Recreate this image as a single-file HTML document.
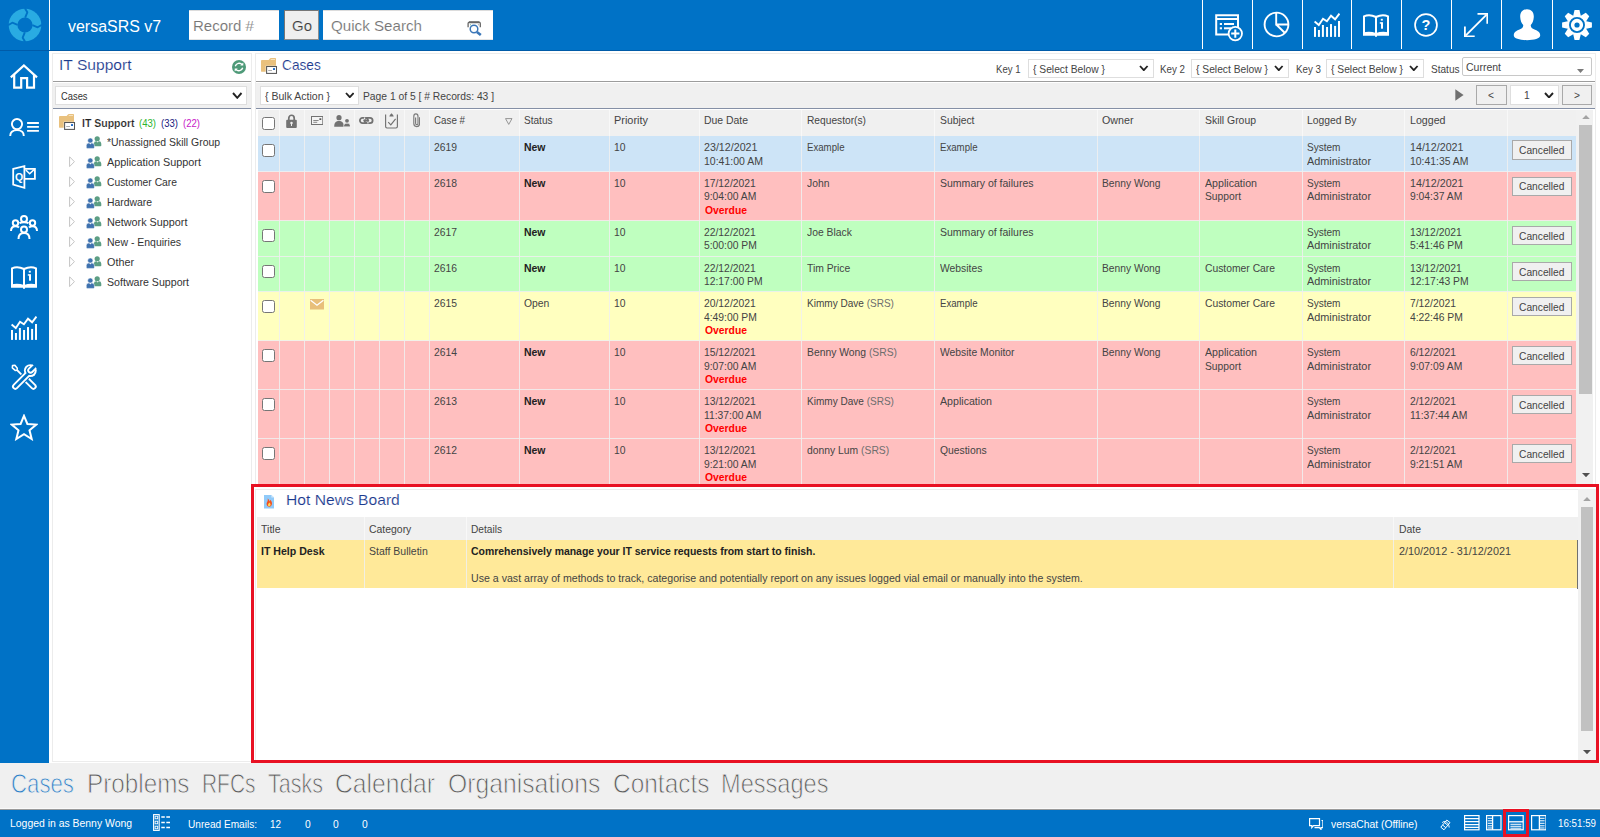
<!DOCTYPE html>
<html lang="en">
<head>
<meta charset="utf-8">
<title>versaSRS v7</title>
<style>
*{box-sizing:border-box;margin:0;padding:0}
html,body{width:1600px;height:837px;overflow:hidden}
body{position:relative;background:#fff;font-family:"Liberation Sans",sans-serif;font-size:11px;color:#444;line-height:13.6px}
.abs{position:absolute}
.t{position:absolute;white-space:nowrap;transform-origin:0 50%}
#topbar{position:absolute;left:0;top:0;width:1600px;height:50px;background:#0072c6}
#sidebar{position:absolute;left:0;top:50px;width:49px;height:713px;background:#0072c6;border-top:1px solid #005ba8}
.vsep{position:absolute;top:0;width:1px;height:49px;background:#fff}
.inp{position:absolute;top:10px;height:30px;background:#fff;color:#767676;font-size:15.2px;line-height:30px}
#gobtn{position:absolute;left:284px;top:10px;width:35px;height:30px;background:#efefef;border:1px solid #767676;border-right-color:#9a9a9a;border-bottom-color:#9a9a9a;color:#333;font-size:15.2px;line-height:28px;text-align:center}
.panel{position:absolute;background:#fff;border:1px solid #e2e2e2}
.ptitle{position:absolute;font-size:15.6px;line-height:20px;color:#2c4a8e;white-space:nowrap}
.sel{position:absolute;background:#fff;border:1px solid #dcdcdc;font-size:11px;color:#444;white-space:nowrap}
.chev{position:absolute}
.btn{position:absolute;background:#f0f0f0;border:1px solid #adadad;text-align:center;color:#333}
.hl{position:absolute;height:2px;background:#b4b4b4}
.hl2{position:absolute;height:2px;background:#8c93a5}
</style>
</head>
<body>
<div id="topbar">
<svg class="abs" style="left:0px;top:0px" width="50" height="50" viewBox="0 0 50 50" ><g fill="#29abe2"><circle cx="25" cy="25" r="16.3"/></g><circle cx="25" cy="25" r="7.6" fill="#0072c6"/><g stroke="#0072c6" stroke-width="1.9" fill="none" stroke-linejoin="round"><path d="M24.8 8 L27.3 12.3 L25.2 17.6"/><path d="M42 24.8 L37.7 27.3 L32.4 25.2"/><path d="M25.2 42 L22.7 37.7 L24.8 32.4"/><path d="M8 25.2 L12.3 22.7 L17.6 24.8"/></g></svg>
<div class="vsep" style="left:49px;height:50px"></div>
<span class="t" style="left:68px;top:18px;font-size:17.4px;line-height:17.4px;color:#fff;transform:scaleX(0.918);">versaSRS v7</span>
<div class="abs" style="left:189px;top:10px;width:90px;height:30px;background:#fff;border-top:1px solid #dcdcdc;border-bottom:1px solid #e4e4e4;"></div>
<span class="t" style="left:193px;top:19px;font-size:14.4px;line-height:14.4px;color:#767676;-webkit-text-stroke:0.12px #fff;transform:scaleX(1.044);">Record #</span>
<div class="abs" style="left:284px;top:10px;width:35px;height:30px;background:#efefef;border:1px solid #767676;border-right-color:#8f8f8f;border-bottom-color:#8f8f8f;"></div>
<span class="t" style="left:292px;top:19px;font-size:14.4px;line-height:14.4px;color:#3c3c3c;-webkit-text-stroke:0.15px #efefef;transform:scaleX(1.041);">Go</span>
<div class="abs" style="left:323px;top:10px;width:169.5px;height:30px;background:#fff;border-top:1px solid #dcdcdc;border-bottom:1px solid #e4e4e4;"></div>
<span class="t" style="left:331px;top:19px;font-size:14.4px;line-height:14.4px;color:#767676;-webkit-text-stroke:0.12px #fff;transform:scaleX(1.053);">Quick Search</span>
<svg class="abs" style="left:466.5px;top:20.5px" width="15" height="15" viewBox="0 0 15 15" ><path d="M1.1 6.2 V2.6 Q1.1 1.2 2.5 1.2 H11.9 Q13.3 1.2 13.3 2.6 V6.2" fill="none" stroke="#666" stroke-width="1.3"/><path d="M2 1.3 H12.4" stroke="#666" stroke-width="1.9"/><circle cx="3.4" cy="3.7" r="0.5" fill="#3a9a6a"/><circle cx="11.3" cy="3.7" r="0.5" fill="#777"/><circle cx="7" cy="8" r="3.8" fill="#fff" stroke="#3a76b8" stroke-width="1.5"/><path d="M9.9 10.9 L13.8 14" stroke="#3a76b8" stroke-width="2.6" fill="none"/></svg>
<div class="vsep" style="left:1202px"></div>
<div class="vsep" style="left:1252px"></div>
<div class="vsep" style="left:1302px"></div>
<div class="vsep" style="left:1351px"></div>
<div class="vsep" style="left:1401px"></div>
<div class="vsep" style="left:1451px"></div>
<div class="vsep" style="left:1501px"></div>
<div class="vsep" style="left:1552px"></div>
<svg class="abs" style="left:1215px;top:13.5px" width="28" height="28" viewBox="0 0 28 28" ><g fill="none" stroke="#fff" stroke-width="2" stroke-width="1.9"><path d="M17 20.5 H1.2 V1.2 H23 V13"/><path d="M1.2 5 H23" /></g><g fill="#fff"><rect x="4.8" y="9" width="2.2" height="2"/><rect x="9" y="9" width="10" height="2"/><rect x="4.8" y="13.3" width="2.2" height="2"/><rect x="9" y="13.3" width="7" height="2"/></g><circle cx="20.3" cy="19.6" r="6.7" fill="#0072c6" stroke="#fff" stroke-width="1.8"/><path d="M20.3 15.5 V23.7 M16.2 19.6 H24.4" stroke="#fff" stroke-width="2" fill="none"/></svg>
<svg class="abs" style="left:1263.3px;top:11.100000000000001px" width="27" height="27" viewBox="0 0 27 27" ><g fill="none" stroke="#fff" stroke-width="1.9"><circle cx="13.5" cy="13.5" r="11.9"/><path d="M13.2 1.7 V13.5 H25.3 M13.2 13.5 L21.7 21.8"/></g></svg>
<svg class="abs" style="left:1314px;top:13px" width="26" height="24" viewBox="0 0 26 24" ><g fill="#fff"><rect x="0.00" y="14" width="2" height="9.9"/><rect x="3.95" y="17" width="2" height="6.9"/><rect x="7.90" y="12" width="2" height="11.9"/><rect x="12.05" y="14" width="2" height="9.9"/><rect x="16.00" y="11.1" width="2" height="12.8"/><rect x="20.10" y="12.9" width="2" height="11.0"/><rect x="24.00" y="8" width="2" height="15.9"/></g><path d="M0.6 8.5 L4.8 12 L9 5.8 L12.9 8.3 L17 2.7 L21.1 6.3 L25.4 0.6" fill="none" stroke="#fff" stroke-width="1.9"/></svg>
<svg class="abs" style="left:1363px;top:14.2px" width="26" height="23" viewBox="0 0 26 23" ><g fill="none" stroke="#fff" stroke-width="2"><path d="M1 19.5 V2.3 Q6.5 -0.3 13 3 Q19.5 -0.3 25 2.3 V19.5"/><path d="M13 3 V22.8"/></g><path d="M0 18.6 Q6.5 16.9 13 19 Q19.5 16.9 26 18.6 V21.7 H0 Z" fill="#fff"/><rect x="17.8" y="4.8" width="2" height="1.8" fill="#fff"/><rect x="18" y="8.2" width="2" height="6.5" fill="#fff"/><rect x="16.8" y="8.2" width="1.6" height="1.5" fill="#fff"/></svg>
<svg class="abs" style="left:1412.7px;top:12px" width="26" height="26" viewBox="0 0 26 26" ><circle cx="13" cy="13" r="10.95" fill="none" stroke="#fff" stroke-width="1.7"/><text x="13" y="18.4" text-anchor="middle" font-family="Liberation Sans,sans-serif" font-weight="700" font-size="14.5" fill="#fff">?</text></svg>
<svg class="abs" style="left:1463.7px;top:12.7px" width="24.2" height="24.2" viewBox="0 0 24.2 24.2" ><g fill="none" stroke="#fff" stroke-width="1.8" stroke-linecap="butt"><path d="M1.6 22.6 L22.6 1.6"/><path d="M13.5 0.9 H23.3 V10.7"/><path d="M0.9 13.5 V23.3 H10.7"/></g></svg>
<svg class="abs" style="left:1512.8px;top:9.2px" width="28" height="31.5" viewBox="0 0 28 31.5" ><path fill="#fff" d="M14 0.3 C18.5 0.3 21 3.5 20.8 8 C20.6 11.5 19.5 14.5 17.8 16 C17.5 18.3 19 19.6 21.5 20.6 C25 22 27.2 23.3 27.2 26.6 C27.2 29.6 21 31.2 14 31.2 C7 31.2 0.8 29.6 0.8 26.6 C0.8 23.3 3 22 6.5 20.6 C9 19.6 10.5 18.3 10.2 16 C8.5 14.5 7.4 11.5 7.2 8 C7 3.5 9.5 0.3 14 0.3 Z"/></svg>
<svg class="abs" style="left:1562.3px;top:10px" width="30" height="30" viewBox="0 0 31 31" ><g transform="translate(15.5 15.5)" fill="#fff"><path d="M-4.2 -8.5 L-2.5 -15.4 H2.5 L4.2 -8.5 Z" transform="rotate(0)"/><path d="M-4.2 -8.5 L-2.5 -15.4 H2.5 L4.2 -8.5 Z" transform="rotate(45)"/><path d="M-4.2 -8.5 L-2.5 -15.4 H2.5 L4.2 -8.5 Z" transform="rotate(90)"/><path d="M-4.2 -8.5 L-2.5 -15.4 H2.5 L4.2 -8.5 Z" transform="rotate(135)"/><path d="M-4.2 -8.5 L-2.5 -15.4 H2.5 L4.2 -8.5 Z" transform="rotate(180)"/><path d="M-4.2 -8.5 L-2.5 -15.4 H2.5 L4.2 -8.5 Z" transform="rotate(225)"/><path d="M-4.2 -8.5 L-2.5 -15.4 H2.5 L4.2 -8.5 Z" transform="rotate(270)"/><path d="M-4.2 -8.5 L-2.5 -15.4 H2.5 L4.2 -8.5 Z" transform="rotate(315)"/><circle r="10"/></g><circle cx="15.5" cy="15.5" r="7.3" fill="none" stroke="#0072c6" stroke-width="1.9"/><circle cx="15.5" cy="15.5" r="2.7" fill="#0072c6"/></svg>
</div>
<div id="sidebar"></div>
<div class="abs" style="left:49px;top:50px;width:1551px;height:1px;background:#005ba8;"></div>
<svg class="abs" style="left:10px;top:63px" width="28" height="26" viewBox="0 0 28 26" ><g fill="none" stroke="#fff" stroke-width="2.2" stroke-linejoin="miter"><path d="M0.8 14.4 L13.9 2.4 L27 14.4"/><path d="M4.2 11.5 V24.7 H11.2 V15.1 H17.1 V24.7 H24 V11.5"/></g></svg>
<svg class="abs" style="left:9px;top:118px" width="31" height="19" viewBox="0 0 31 19" ><g fill="none" stroke="#fff" stroke-width="1.9"><circle cx="8" cy="6.1" r="5.1"/><path d="M1.2 18 C1.2 13.6 4.3 12.1 8 12.1 C11.7 12.1 14.8 13.6 14.8 18"/><path d="M18.1 5 H29.9 M18.1 8.9 H29.9 M18.1 12.8 H29.9" stroke-width="1.8"/></g></svg>
<svg class="abs" style="left:12.2px;top:165px" width="25" height="25" viewBox="0 0 25 25" ><g fill="none" stroke="#fff" stroke-width="1.8"><path d="M1.2 3.9 L12.4 1.2 V22.8 L1.2 19.6 Z"/><path d="M12.4 3.9 H22.9 V13.9 H12.4"/><path d="M13.8 5 L17.7 8.7 L22 4.6" stroke-width="1.5"/></g><text x="3.1" y="16.2" font-family="Liberation Sans,sans-serif" font-weight="700" font-size="10.5" fill="#fff">Q</text></svg>
<svg class="abs" style="left:10px;top:215px" width="28" height="25" viewBox="0 0 28 25" ><g fill="none" stroke="#fff" stroke-width="2" stroke-width="1.7"><circle cx="14" cy="4" r="3"/><circle cx="5.5" cy="8" r="2.7"/><circle cx="22.5" cy="8" r="2.7"/><circle cx="14" cy="14.5" r="3"/><path d="M8.5 24 C8.5 19.5 11 18 14 18 C17 18 19.5 19.5 19.5 24"/><path d="M1 16 C1 12.5 3 11.2 5.5 11.2 C7 11.2 8.2 11.7 9 12.5"/><path d="M27 16 C27 12.5 25 11.2 22.5 11.2 C21 11.2 19.8 11.7 19 12.5"/><path d="M9.5 8.2 C10.5 7.4 12 7.2 14 7.2 C16 7.2 17.5 7.4 18.5 8.2"/></g></svg>
<svg class="abs" style="left:11.2px;top:266px" width="26" height="23" viewBox="0 0 26 23" ><g fill="none" stroke="#fff" stroke-width="2"><path d="M1 19.5 V2.3 Q6.5 -0.3 13 3 Q19.5 -0.3 25 2.3 V19.5"/><path d="M13 3 V22.8"/></g><path d="M0 18.6 Q6.5 16.9 13 19 Q19.5 16.9 26 18.6 V21.7 H0 Z" fill="#fff"/><rect x="17.8" y="4.8" width="2" height="1.8" fill="#fff"/><rect x="18" y="8.2" width="2" height="6.5" fill="#fff"/><rect x="16.8" y="8.2" width="1.6" height="1.5" fill="#fff"/></svg>
<svg class="abs" style="left:11px;top:315.6px" width="26" height="24" viewBox="0 0 26 24" ><g fill="#fff"><rect x="0.00" y="14" width="2" height="9.9"/><rect x="3.95" y="17" width="2" height="6.9"/><rect x="7.90" y="12" width="2" height="11.9"/><rect x="12.05" y="14" width="2" height="9.9"/><rect x="16.00" y="11.1" width="2" height="12.8"/><rect x="20.10" y="12.9" width="2" height="11.0"/><rect x="24.00" y="8" width="2" height="15.9"/></g><path d="M0.6 8.5 L4.8 12 L9 5.8 L12.9 8.3 L17 2.7 L21.1 6.3 L25.4 0.6" fill="none" stroke="#fff" stroke-width="1.9"/></svg>
<svg class="abs" style="left:10.5px;top:363.5px" width="27" height="27" viewBox="0 0 27 27" ><path d="M5.6 5.7 L12.5 12.6" stroke="#fff" stroke-width="1.9" fill="none"/><path d="M1.5 1.6 L3.9 1.3 L6.3 4.3 L6 6.2 L4.2 6.4 L1.3 3.9 Z" fill="#0072c6" stroke="#fff" stroke-width="1.5" stroke-linejoin="round"/><path d="M16.9 17 L22.4 22.5" stroke="#fff" stroke-width="6.5" stroke-linecap="round" fill="none"/><path d="M16.9 17 L22.4 22.5" stroke="#0072c6" stroke-width="2.7" stroke-linecap="round" fill="none"/><path d="M13.2 13.3 L16.9 17" stroke="#fff" stroke-width="6.5" stroke-linecap="butt" fill="none"/><path d="M13.2 13.3 L17.2 17.3" stroke="#0072c6" stroke-width="2.7" stroke-linecap="butt" fill="none"/><path d="M4.3 22.5 L17 9.8" stroke="#0072c6" stroke-width="8.3" stroke-linecap="round" fill="none"/><defs><clipPath id="wh"><circle cx="19.3" cy="6.6" r="6.4"/></clipPath></defs><circle cx="19.3" cy="6.6" r="6.4" fill="#fff"/><path d="M4.3 22.5 L17.5 9.3" stroke="#fff" stroke-width="6.5" stroke-linecap="round" fill="none"/><circle cx="19.3" cy="6.6" r="4.5" fill="#0072c6"/><path d="M4.3 22.5 L18 8.8" stroke="#0072c6" stroke-width="2.7" stroke-linecap="round" fill="none"/><g clip-path="url(#wh)"><path d="M19.6 6.3 L27 -1.1" stroke="#fff" stroke-width="6.6" stroke-linecap="round" fill="none"/></g><path d="M19.6 6.3 L28 -2.1" stroke="#0072c6" stroke-width="2.8" stroke-linecap="round" fill="none"/></svg>
<svg class="abs" style="left:10px;top:413.8px" width="28" height="27" viewBox="0 0 28 27" ><path fill="none" stroke="#fff" stroke-width="2" stroke-width="1.9" stroke-linejoin="miter" d="M14 1.8 L17.4 10 L26.3 10.6 L19.5 16.3 L21.7 25 L14 20.2 L6.3 25 L8.5 16.3 L1.7 10.6 L10.6 10 Z"/></svg>
<div class="abs" style="left:52px;top:53px;width:200px;height:709px;background:#fff;border:1px solid #ececec;"></div>
<span class="t" style="left:59.3px;top:57px;font-size:15px;line-height:15px;color:#1b3a8e;-webkit-text-stroke:0.15px #fff;transform:scaleX(1.039);">IT Support</span>
<svg class="abs" style="left:232.2px;top:59.900000000000006px" width="14" height="14" viewBox="0 0 14 14" ><circle cx="7" cy="7" r="7" fill="#4e9a78"/><g fill="none" stroke="#fff" stroke-width="1.4"><path d="M3.3 6.2 A4 4 0 0 1 10.2 4.6"/><path d="M10.7 7.8 A4 4 0 0 1 3.8 9.4"/></g><path d="M11.3 2.6 V5.6 H8.3 Z M2.7 11.4 V8.4 H5.7 Z" fill="#fff"/></svg>
<div class="abs" style="left:53px;top:81px;width:198px;height:1px;background:#9c9c9c;"></div>
<div class="abs" style="left:53px;top:83px;width:198px;height:25px;background:#f0f0f0;"></div>
<div class="abs" style="left:55px;top:85.5px;width:192px;height:19.5px;background:#fff;border:1px solid #dedede;"></div>
<span class="t" style="left:61px;top:91px;font-size:11px;line-height:11px;color:#333;transform:scaleX(0.850);">Cases</span>
<svg class="abs" style="left:232px;top:91.5px" width="10.5" height="7" viewBox="0 0 10.5 7" ><path d="M1 1 L5.25 5.8 L9.5 1" fill="none" stroke="#222" stroke-width="1.9"/></svg>
<div class="abs" style="left:53px;top:108px;width:198px;height:1px;background:#8590a6;"></div>
<svg class="abs" style="left:59px;top:114px" width="16.5" height="16" viewBox="0 0 16.5 16" ><path d="M0 3 Q0 2.1 0.9 2.1 H7.6 L8.9 0.4 Q9.2 0 9.8 0 H14.3 Q15 0 15 0.7 V7.8 H4.7 V13.8 H0.9 Q0 13.8 0 12.9 Z" fill="#e9c17e"/><rect x="9.8" y="1" width="4.2" height="0.9" fill="#f7e6c8"/><rect x="5.6" y="8.5" width="9.9" height="6.9" fill="#fff" stroke="#555" stroke-width="1.05"/><rect x="7.2" y="12" width="3.8" height="0.8" fill="#999"/><rect x="12" y="10.1" width="2" height="1.9" fill="#1e6ac8"/></svg>
<span class="t" style="left:82.3px;top:118px;font-size:11px;line-height:11px;color:#222;font-weight:700;-webkit-text-stroke:0.2px #fff;transform:scaleX(0.955);">IT Support</span>
<span class="t" style="left:138.7px;top:118px;font-size:11px;line-height:11px;color:#2db52d;transform:scaleX(0.869);">(43)</span>
<span class="t" style="left:160.8px;top:118px;font-size:11px;line-height:11px;color:#1a1a80;transform:scaleX(0.869);">(33)</span>
<span class="t" style="left:182.8px;top:118px;font-size:11px;line-height:11px;color:#c818c8;transform:scaleX(0.869);">(22)</span>
<svg class="abs" style="left:86.2px;top:135.5px" width="16" height="13" viewBox="0 0 16 13" ><g fill="#5c9e84"><circle cx="11.2" cy="2.8" r="2.6"/><path d="M7.9 10.2 V7.7 Q7.9 5.3 10.3 5.3 H12.9 Q15.3 5.3 15.3 7.7 V9.4 Q15.3 10.2 14.5 10.2 Z"/></g><path d="M10.5 5.2 L11.6 6.6 L12.7 5.2 Z" fill="#fff"/><g fill="#3f72af" stroke="#fff" stroke-width="0.5"><circle cx="4.3" cy="4.6" r="2.6"/><path d="M0.3 11.6 V9.5 Q0.3 7.1 2.7 7.1 H6 Q8.4 7.1 8.4 9.5 V11.6 Q8.4 12.4 7.6 12.4 H1.1 Q0.3 12.4 0.3 11.6 Z"/></g><path d="M3.3 7.1 L4.35 8.4 L5.4 7.1 Z" fill="#fff"/></svg>
<span class="t" style="left:107.2px;top:137px;font-size:11px;line-height:11px;color:#333;transform:scaleX(0.948);">*Unassigned Skill Group</span>
<svg class="abs" style="left:68.7px;top:155.89999999999998px" width="6.5" height="11.5" viewBox="0 0 6.5 11.5" ><path d="M0.6 0.8 L5.4 5.7 L0.6 10.6 Z" fill="#fff" stroke="#c4c4c4" stroke-width="1"/></svg>
<svg class="abs" style="left:86.2px;top:155.5px" width="16" height="13" viewBox="0 0 16 13" ><g fill="#5c9e84"><circle cx="11.2" cy="2.8" r="2.6"/><path d="M7.9 10.2 V7.7 Q7.9 5.3 10.3 5.3 H12.9 Q15.3 5.3 15.3 7.7 V9.4 Q15.3 10.2 14.5 10.2 Z"/></g><path d="M10.5 5.2 L11.6 6.6 L12.7 5.2 Z" fill="#fff"/><g fill="#3f72af" stroke="#fff" stroke-width="0.5"><circle cx="4.3" cy="4.6" r="2.6"/><path d="M0.3 11.6 V9.5 Q0.3 7.1 2.7 7.1 H6 Q8.4 7.1 8.4 9.5 V11.6 Q8.4 12.4 7.6 12.4 H1.1 Q0.3 12.4 0.3 11.6 Z"/></g><path d="M3.3 7.1 L4.35 8.4 L5.4 7.1 Z" fill="#fff"/></svg>
<span class="t" style="left:107.2px;top:157px;font-size:11px;line-height:11px;color:#333;transform:scaleX(0.985);">Application Support</span>
<svg class="abs" style="left:68.7px;top:175.89999999999998px" width="6.5" height="11.5" viewBox="0 0 6.5 11.5" ><path d="M0.6 0.8 L5.4 5.7 L0.6 10.6 Z" fill="#fff" stroke="#c4c4c4" stroke-width="1"/></svg>
<svg class="abs" style="left:86.2px;top:175.5px" width="16" height="13" viewBox="0 0 16 13" ><g fill="#5c9e84"><circle cx="11.2" cy="2.8" r="2.6"/><path d="M7.9 10.2 V7.7 Q7.9 5.3 10.3 5.3 H12.9 Q15.3 5.3 15.3 7.7 V9.4 Q15.3 10.2 14.5 10.2 Z"/></g><path d="M10.5 5.2 L11.6 6.6 L12.7 5.2 Z" fill="#fff"/><g fill="#3f72af" stroke="#fff" stroke-width="0.5"><circle cx="4.3" cy="4.6" r="2.6"/><path d="M0.3 11.6 V9.5 Q0.3 7.1 2.7 7.1 H6 Q8.4 7.1 8.4 9.5 V11.6 Q8.4 12.4 7.6 12.4 H1.1 Q0.3 12.4 0.3 11.6 Z"/></g><path d="M3.3 7.1 L4.35 8.4 L5.4 7.1 Z" fill="#fff"/></svg>
<span class="t" style="left:107.2px;top:177px;font-size:11px;line-height:11px;color:#333;transform:scaleX(0.939);">Customer Care</span>
<svg class="abs" style="left:68.7px;top:195.89999999999998px" width="6.5" height="11.5" viewBox="0 0 6.5 11.5" ><path d="M0.6 0.8 L5.4 5.7 L0.6 10.6 Z" fill="#fff" stroke="#c4c4c4" stroke-width="1"/></svg>
<svg class="abs" style="left:86.2px;top:195.5px" width="16" height="13" viewBox="0 0 16 13" ><g fill="#5c9e84"><circle cx="11.2" cy="2.8" r="2.6"/><path d="M7.9 10.2 V7.7 Q7.9 5.3 10.3 5.3 H12.9 Q15.3 5.3 15.3 7.7 V9.4 Q15.3 10.2 14.5 10.2 Z"/></g><path d="M10.5 5.2 L11.6 6.6 L12.7 5.2 Z" fill="#fff"/><g fill="#3f72af" stroke="#fff" stroke-width="0.5"><circle cx="4.3" cy="4.6" r="2.6"/><path d="M0.3 11.6 V9.5 Q0.3 7.1 2.7 7.1 H6 Q8.4 7.1 8.4 9.5 V11.6 Q8.4 12.4 7.6 12.4 H1.1 Q0.3 12.4 0.3 11.6 Z"/></g><path d="M3.3 7.1 L4.35 8.4 L5.4 7.1 Z" fill="#fff"/></svg>
<span class="t" style="left:107.2px;top:197px;font-size:11px;line-height:11px;color:#333;transform:scaleX(0.944);">Hardware</span>
<svg class="abs" style="left:68.7px;top:215.89999999999998px" width="6.5" height="11.5" viewBox="0 0 6.5 11.5" ><path d="M0.6 0.8 L5.4 5.7 L0.6 10.6 Z" fill="#fff" stroke="#c4c4c4" stroke-width="1"/></svg>
<svg class="abs" style="left:86.2px;top:215.5px" width="16" height="13" viewBox="0 0 16 13" ><g fill="#5c9e84"><circle cx="11.2" cy="2.8" r="2.6"/><path d="M7.9 10.2 V7.7 Q7.9 5.3 10.3 5.3 H12.9 Q15.3 5.3 15.3 7.7 V9.4 Q15.3 10.2 14.5 10.2 Z"/></g><path d="M10.5 5.2 L11.6 6.6 L12.7 5.2 Z" fill="#fff"/><g fill="#3f72af" stroke="#fff" stroke-width="0.5"><circle cx="4.3" cy="4.6" r="2.6"/><path d="M0.3 11.6 V9.5 Q0.3 7.1 2.7 7.1 H6 Q8.4 7.1 8.4 9.5 V11.6 Q8.4 12.4 7.6 12.4 H1.1 Q0.3 12.4 0.3 11.6 Z"/></g><path d="M3.3 7.1 L4.35 8.4 L5.4 7.1 Z" fill="#fff"/></svg>
<span class="t" style="left:107.2px;top:217px;font-size:11px;line-height:11px;color:#333;transform:scaleX(0.982);">Network Support</span>
<svg class="abs" style="left:68.7px;top:235.89999999999998px" width="6.5" height="11.5" viewBox="0 0 6.5 11.5" ><path d="M0.6 0.8 L5.4 5.7 L0.6 10.6 Z" fill="#fff" stroke="#c4c4c4" stroke-width="1"/></svg>
<svg class="abs" style="left:86.2px;top:235.5px" width="16" height="13" viewBox="0 0 16 13" ><g fill="#5c9e84"><circle cx="11.2" cy="2.8" r="2.6"/><path d="M7.9 10.2 V7.7 Q7.9 5.3 10.3 5.3 H12.9 Q15.3 5.3 15.3 7.7 V9.4 Q15.3 10.2 14.5 10.2 Z"/></g><path d="M10.5 5.2 L11.6 6.6 L12.7 5.2 Z" fill="#fff"/><g fill="#3f72af" stroke="#fff" stroke-width="0.5"><circle cx="4.3" cy="4.6" r="2.6"/><path d="M0.3 11.6 V9.5 Q0.3 7.1 2.7 7.1 H6 Q8.4 7.1 8.4 9.5 V11.6 Q8.4 12.4 7.6 12.4 H1.1 Q0.3 12.4 0.3 11.6 Z"/></g><path d="M3.3 7.1 L4.35 8.4 L5.4 7.1 Z" fill="#fff"/></svg>
<span class="t" style="left:107.2px;top:237px;font-size:11px;line-height:11px;color:#333;transform:scaleX(0.953);">New - Enquiries</span>
<svg class="abs" style="left:68.7px;top:255.89999999999998px" width="6.5" height="11.5" viewBox="0 0 6.5 11.5" ><path d="M0.6 0.8 L5.4 5.7 L0.6 10.6 Z" fill="#fff" stroke="#c4c4c4" stroke-width="1"/></svg>
<svg class="abs" style="left:86.2px;top:255.5px" width="16" height="13" viewBox="0 0 16 13" ><g fill="#5c9e84"><circle cx="11.2" cy="2.8" r="2.6"/><path d="M7.9 10.2 V7.7 Q7.9 5.3 10.3 5.3 H12.9 Q15.3 5.3 15.3 7.7 V9.4 Q15.3 10.2 14.5 10.2 Z"/></g><path d="M10.5 5.2 L11.6 6.6 L12.7 5.2 Z" fill="#fff"/><g fill="#3f72af" stroke="#fff" stroke-width="0.5"><circle cx="4.3" cy="4.6" r="2.6"/><path d="M0.3 11.6 V9.5 Q0.3 7.1 2.7 7.1 H6 Q8.4 7.1 8.4 9.5 V11.6 Q8.4 12.4 7.6 12.4 H1.1 Q0.3 12.4 0.3 11.6 Z"/></g><path d="M3.3 7.1 L4.35 8.4 L5.4 7.1 Z" fill="#fff"/></svg>
<span class="t" style="left:107.2px;top:257px;font-size:11px;line-height:11px;color:#333;transform:scaleX(0.981);">Other</span>
<svg class="abs" style="left:68.7px;top:275.9px" width="6.5" height="11.5" viewBox="0 0 6.5 11.5" ><path d="M0.6 0.8 L5.4 5.7 L0.6 10.6 Z" fill="#fff" stroke="#c4c4c4" stroke-width="1"/></svg>
<svg class="abs" style="left:86.2px;top:275.5px" width="16" height="13" viewBox="0 0 16 13" ><g fill="#5c9e84"><circle cx="11.2" cy="2.8" r="2.6"/><path d="M7.9 10.2 V7.7 Q7.9 5.3 10.3 5.3 H12.9 Q15.3 5.3 15.3 7.7 V9.4 Q15.3 10.2 14.5 10.2 Z"/></g><path d="M10.5 5.2 L11.6 6.6 L12.7 5.2 Z" fill="#fff"/><g fill="#3f72af" stroke="#fff" stroke-width="0.5"><circle cx="4.3" cy="4.6" r="2.6"/><path d="M0.3 11.6 V9.5 Q0.3 7.1 2.7 7.1 H6 Q8.4 7.1 8.4 9.5 V11.6 Q8.4 12.4 7.6 12.4 H1.1 Q0.3 12.4 0.3 11.6 Z"/></g><path d="M3.3 7.1 L4.35 8.4 L5.4 7.1 Z" fill="#fff"/></svg>
<span class="t" style="left:107.2px;top:277px;font-size:11px;line-height:11px;color:#333;transform:scaleX(0.965);">Software Support</span>
<div class="abs" style="left:255px;top:53px;width:1341px;height:431px;background:#fff;border:1px solid #ececec;border-bottom:none;"></div>
<svg class="abs" style="left:261px;top:58px" width="16.5" height="16" viewBox="0 0 16.5 16" ><path d="M0 3 Q0 2.1 0.9 2.1 H7.6 L8.9 0.4 Q9.2 0 9.8 0 H14.3 Q15 0 15 0.7 V7.8 H4.7 V13.8 H0.9 Q0 13.8 0 12.9 Z" fill="#e9c17e"/><rect x="9.8" y="1" width="4.2" height="0.9" fill="#f7e6c8"/><rect x="5.6" y="8.5" width="9.9" height="6.9" fill="#fff" stroke="#555" stroke-width="1.05"/><rect x="7.2" y="12" width="3.8" height="0.8" fill="#999"/><rect x="12" y="10.1" width="2" height="1.9" fill="#1e6ac8"/></svg>
<span class="t" style="left:281.6px;top:57px;font-size:15px;line-height:15px;color:#1b3a8e;-webkit-text-stroke:0.15px #fff;transform:scaleX(0.912);">Cases</span>
<span class="t" style="left:996px;top:64px;font-size:11px;line-height:11px;transform:scaleX(0.871);">Key 1</span>
<div class="abs" style="left:1028px;top:58.5px;width:125.5px;height:19px;background:#fff;border:1px solid #dedede;"></div><span class="t" style="left:1033px;top:64px;font-size:11px;line-height:11px;color:#444;transform:scaleX(0.934);">{ Select Below }</span><svg class="abs" style="left:1139.0px;top:64.9px" width="9.6" height="6.4" viewBox="0 0 9.6 6.4" ><path d="M1 1 L4.8 5.2 L8.6 1" fill="none" stroke="#222" stroke-width="1.8"/></svg>
<span class="t" style="left:1160px;top:64px;font-size:11px;line-height:11px;transform:scaleX(0.888);">Key 2</span>
<div class="abs" style="left:1191px;top:58.5px;width:97.5px;height:19px;background:#fff;border:1px solid #dedede;"></div><span class="t" style="left:1196px;top:64px;font-size:11px;line-height:11px;color:#444;transform:scaleX(0.934);">{ Select Below }</span><svg class="abs" style="left:1274.0px;top:64.9px" width="9.6" height="6.4" viewBox="0 0 9.6 6.4" ><path d="M1 1 L4.8 5.2 L8.6 1" fill="none" stroke="#222" stroke-width="1.8"/></svg>
<span class="t" style="left:1295.5px;top:64px;font-size:11px;line-height:11px;transform:scaleX(0.888);">Key 3</span>
<div class="abs" style="left:1326px;top:58.5px;width:97.5px;height:19px;background:#fff;border:1px solid #dedede;"></div><span class="t" style="left:1331px;top:64px;font-size:11px;line-height:11px;color:#444;transform:scaleX(0.934);">{ Select Below }</span><svg class="abs" style="left:1409.0px;top:64.9px" width="9.6" height="6.4" viewBox="0 0 9.6 6.4" ><path d="M1 1 L4.8 5.2 L8.6 1" fill="none" stroke="#222" stroke-width="1.8"/></svg>
<span class="t" style="left:1430.7px;top:64px;font-size:11px;line-height:11px;transform:scaleX(0.914);">Status</span>
<div class="abs" style="left:1462px;top:57px;width:129.5px;height:19px;background:#fff;border:1px solid #c8c8c8;border-radius:2px;"></div>
<span class="t" style="left:1465.5px;top:62px;font-size:11px;line-height:11px;transform:scaleX(0.954);">Current</span>
<svg class="abs" style="left:1576.5px;top:69px" width="7" height="4" viewBox="0 0 7 4" ><path d="M0 0 L3.5 4 L7 0 Z" fill="#7a7a7a"/></svg>
<div class="abs" style="left:256px;top:81px;width:1339px;height:1px;background:#9c9c9c;"></div>
<div class="abs" style="left:256px;top:83px;width:1339px;height:25px;background:#f0f0f0;"></div>
<div class="abs" style="left:260px;top:85.5px;width:99px;height:19px;background:#fff;border:1px solid #dedede;"></div><span class="t" style="left:265px;top:91px;font-size:11px;line-height:11px;color:#444;transform:scaleX(0.957);">{ Bulk Action }</span><svg class="abs" style="left:344.5px;top:91.9px" width="9.6" height="6.4" viewBox="0 0 9.6 6.4" ><path d="M1 1 L4.8 5.2 L8.6 1" fill="none" stroke="#222" stroke-width="1.8"/></svg>
<span class="t" style="left:363px;top:91px;font-size:11px;line-height:11px;transform:scaleX(0.936);">Page 1 of 5 [ # Records: 43 ]</span>
<svg class="abs" style="left:1454.5px;top:89px" width="9" height="12" viewBox="0 0 9 12" ><path d="M0.3 0.3 L8.6 6 L0.3 11.7 Z" fill="#707070"/></svg>
<div class="abs" style="left:1476px;top:85.3px;width:30.5px;height:19.3px;background:#f0f0f0;border:1px solid #a9a9a9;"></div>
<span class="t" style="left:1487.5px;top:90px;font-size:11px;line-height:11px;transform:scaleX(0.932);">&lt;</span>
<div class="abs" style="left:1509.5px;top:85.3px;width:49.5px;height:19.3px;background:#fff;border:1px solid #dedede;"></div>
<span class="t" style="left:1523.5px;top:90px;font-size:11px;line-height:11px;transform:scaleX(0.940);">1</span>
<svg class="abs" style="left:1543.5px;top:91.9px" width="10" height="6.6" viewBox="0 0 10 6.6" ><path d="M1 1 L5.0 5.3999999999999995 L9 1" fill="none" stroke="#222" stroke-width="1.9"/></svg>
<div class="abs" style="left:1561.5px;top:85.3px;width:30.5px;height:19.3px;background:#f0f0f0;border:1px solid #a9a9a9;"></div>
<span class="t" style="left:1573.5px;top:90px;font-size:11px;line-height:11px;transform:scaleX(0.932);">&gt;</span>
<div class="abs" style="left:256px;top:108px;width:1339px;height:1px;background:#8590a6;"></div>
<div class="abs" style="left:258px;top:110px;width:1318px;height:26px;background:#f0f0f0;"></div>
<div class="abs" style="left:279px;top:110px;width:1px;height:26px;background:#f8f8f8;"></div><div class="abs" style="left:304px;top:110px;width:1px;height:26px;background:#f8f8f8;"></div><div class="abs" style="left:329px;top:110px;width:1px;height:26px;background:#f8f8f8;"></div><div class="abs" style="left:354px;top:110px;width:1px;height:26px;background:#f8f8f8;"></div><div class="abs" style="left:379px;top:110px;width:1px;height:26px;background:#f8f8f8;"></div><div class="abs" style="left:404px;top:110px;width:1px;height:26px;background:#f8f8f8;"></div><div class="abs" style="left:429px;top:110px;width:1px;height:26px;background:#f8f8f8;"></div><div class="abs" style="left:519px;top:110px;width:1px;height:26px;background:#f8f8f8;"></div><div class="abs" style="left:609px;top:110px;width:1px;height:26px;background:#f8f8f8;"></div><div class="abs" style="left:699px;top:110px;width:1px;height:26px;background:#f8f8f8;"></div><div class="abs" style="left:801px;top:110px;width:1px;height:26px;background:#f8f8f8;"></div><div class="abs" style="left:934px;top:110px;width:1px;height:26px;background:#f8f8f8;"></div><div class="abs" style="left:1097px;top:110px;width:1px;height:26px;background:#f8f8f8;"></div><div class="abs" style="left:1199px;top:110px;width:1px;height:26px;background:#f8f8f8;"></div><div class="abs" style="left:1302px;top:110px;width:1px;height:26px;background:#f8f8f8;"></div><div class="abs" style="left:1404px;top:110px;width:1px;height:26px;background:#f8f8f8;"></div><div class="abs" style="left:1507px;top:110px;width:1px;height:26px;background:#f8f8f8;"></div>
<div class="abs" style="left:262px;top:117px;width:13px;height:13px;background:#fff;border:1px solid #767676;border-radius:2.5px;"></div>
<svg class="abs" style="left:286px;top:114px" width="11" height="14.2" viewBox="0 0 11 14.2" ><path d="M2.8 6.5 V4.2 C2.8 0.3 8.2 0.3 8.2 4.2 V6.5" fill="none" stroke="#727272" stroke-width="1.7"/><rect x="0.2" y="5.8" width="10.6" height="8.2" rx="1" fill="#727272"/><circle cx="5.5" cy="9" r="1.25" fill="#f0f0f0"/><rect x="5" y="9.3" width="1" height="2.7" fill="#f0f0f0"/></svg>
<svg class="abs" style="left:310.8px;top:116px" width="12.3" height="9" viewBox="0 0 12.3 9" ><rect x="0.5" y="0.5" width="11.3" height="8" fill="#f4f4f4" stroke="#727272" stroke-width="1"/><path d="M2.3 4.5 H7.6 M2.3 6.3 H6.2" stroke="#727272" stroke-width="0.85"/><rect x="8.4" y="2.3" width="1.9" height="1.7" fill="#555"/></svg>
<svg class="abs" style="left:333.6px;top:115.2px" width="16.6" height="12" viewBox="0 0 16.6 12" ><g fill="#727272"><circle cx="5" cy="2.7" r="2.6"/><path d="M0.2 11.8 C0.2 7.5 2 6 5 6 C8 6 9.8 7.5 9.8 11.8 Z"/><circle cx="13" cy="5.8" r="1.9"/><path d="M9.6 11.8 C9.6 9.2 11 8.3 13 8.3 C15 8.3 16.4 9.2 16.4 11.8 Z" stroke="#f0f0f0" stroke-width="0.6"/></g></svg>
<svg class="abs" style="left:359.2px;top:116.9px" width="14.5" height="7" viewBox="0 0 14.5 7" ><g fill="none" stroke="#727272" stroke-width="1.8"><rect x="0.9" y="0.9" width="8" height="5.2" rx="2.6"/><rect x="5.6" y="0.9" width="8" height="5.2" rx="2.6"/></g><path d="M8.9 4.6 V6.6" stroke="#f0f0f0" stroke-width="1.1"/><path d="M5.6 0.4 V2.4" stroke="#f0f0f0" stroke-width="1.1"/><path d="M4.4 3.5 H10.1" stroke="#727272" stroke-width="1.5"/></svg>
<svg class="abs" style="left:384.9px;top:113.1px" width="13" height="15.6" viewBox="0 0 13 15.6" ><path d="M0.6 1.6 V13.6 Q0.6 15 2 15 H11 Q12.4 15 12.4 13.6 V1.6" fill="none" stroke="#727272" stroke-width="1.15"/><path d="M4.3 3.6 L4.9 2 L6.5 0.2 L8.1 2 L8.7 3.6 Z" fill="#727272"/><path d="M3.2 9.2 L5.8 11.8 L10.6 5.8" fill="none" stroke="#727272" stroke-width="1.15"/></svg>
<svg class="abs" style="left:413px;top:113.2px" width="7.4" height="14.6" viewBox="0 0 7.4 14.6" ><path d="M6.6 4.2 V10.6 C6.6 14.6 0.8 14.6 0.8 10.6 V3.6 C0.8 0 5 0 5 3.6 V10.2 C5 12.2 2.6 12.2 2.6 10.2 V4.6" fill="none" stroke="#7a7a7a" stroke-width="1.15"/></svg>
<span class="t" style="left:434px;top:115px;font-size:11px;line-height:11px;transform:scaleX(0.889);">Case #</span>
<span class="t" style="left:524px;top:115px;font-size:11px;line-height:11px;transform:scaleX(0.914);">Status</span>
<span class="t" style="left:614px;top:115px;font-size:11px;line-height:11px;transform:scaleX(0.993);">Priority</span>
<span class="t" style="left:704px;top:115px;font-size:11px;line-height:11px;transform:scaleX(0.947);">Due Date</span>
<span class="t" style="left:806.5px;top:115px;font-size:11px;line-height:11px;transform:scaleX(0.928);">Requestor(s)</span>
<span class="t" style="left:939.5px;top:115px;font-size:11px;line-height:11px;transform:scaleX(0.940);">Subject</span>
<span class="t" style="left:1101.5px;top:115px;font-size:11px;line-height:11px;transform:scaleX(0.972);">Owner</span>
<span class="t" style="left:1204.5px;top:115px;font-size:11px;line-height:11px;transform:scaleX(0.948);">Skill Group</span>
<span class="t" style="left:1307px;top:115px;font-size:11px;line-height:11px;transform:scaleX(0.941);">Logged By</span>
<span class="t" style="left:1409.5px;top:115px;font-size:11px;line-height:11px;transform:scaleX(0.967);">Logged</span>
<svg class="abs" style="left:505px;top:118.3px" width="7.5" height="7" viewBox="0 0 7.5 7" ><path d="M0.5 0.6 H7 L3.75 6.4 Z" fill="none" stroke="#8a8a8a" stroke-width="0.9"/></svg>
<div class="abs" style="left:258px;top:136px;width:1318.5px;height:35.5px;background:#cde4f7;"></div>
<div class="abs" style="left:279px;top:136px;width:1px;height:35.5px;background:rgba(240,240,240,0.85);"></div><div class="abs" style="left:304px;top:136px;width:1px;height:35.5px;background:rgba(240,240,240,0.85);"></div><div class="abs" style="left:329px;top:136px;width:1px;height:35.5px;background:rgba(240,240,240,0.85);"></div><div class="abs" style="left:354px;top:136px;width:1px;height:35.5px;background:rgba(240,240,240,0.85);"></div><div class="abs" style="left:379px;top:136px;width:1px;height:35.5px;background:rgba(240,240,240,0.85);"></div><div class="abs" style="left:404px;top:136px;width:1px;height:35.5px;background:rgba(240,240,240,0.85);"></div><div class="abs" style="left:429px;top:136px;width:1px;height:35.5px;background:rgba(240,240,240,0.85);"></div><div class="abs" style="left:519px;top:136px;width:1px;height:35.5px;background:rgba(240,240,240,0.85);"></div><div class="abs" style="left:609px;top:136px;width:1px;height:35.5px;background:rgba(240,240,240,0.85);"></div><div class="abs" style="left:699px;top:136px;width:1px;height:35.5px;background:rgba(240,240,240,0.85);"></div><div class="abs" style="left:801px;top:136px;width:1px;height:35.5px;background:rgba(240,240,240,0.85);"></div><div class="abs" style="left:934px;top:136px;width:1px;height:35.5px;background:rgba(240,240,240,0.85);"></div><div class="abs" style="left:1097px;top:136px;width:1px;height:35.5px;background:rgba(240,240,240,0.85);"></div><div class="abs" style="left:1199px;top:136px;width:1px;height:35.5px;background:rgba(240,240,240,0.85);"></div><div class="abs" style="left:1302px;top:136px;width:1px;height:35.5px;background:rgba(240,240,240,0.85);"></div><div class="abs" style="left:1404px;top:136px;width:1px;height:35.5px;background:rgba(240,240,240,0.85);"></div><div class="abs" style="left:1507px;top:136px;width:1px;height:35.5px;background:rgba(240,240,240,0.85);"></div>
<div class="abs" style="left:258px;top:171px;width:1318.5px;height:1px;background:rgba(240,240,240,0.85);"></div>
<div class="abs" style="left:262px;top:144px;width:13px;height:13px;background:#fff;border:1px solid #767676;border-radius:2.5px;"></div>
<span class="t" style="left:434px;top:142px;font-size:11px;line-height:11px;transform:scaleX(0.940);">2619</span>
<span class="t" style="left:524px;top:142px;font-size:11px;line-height:11px;color:#222;font-weight:700;transform:scaleX(0.950);">New</span>
<span class="t" style="left:614px;top:142px;font-size:11px;line-height:11px;transform:scaleX(0.940);">10</span>
<span class="t" style="left:704px;top:142px;font-size:11px;line-height:11px;transform:scaleX(0.972);">23/12/2021</span>
<span class="t" style="left:704px;top:156px;font-size:11px;line-height:11px;transform:scaleX(0.955);">10:41:00 AM</span>
<span class="t" style="left:806.5px;top:142px;font-size:11px;line-height:11px;transform:scaleX(0.876);">Example</span>
<span class="t" style="left:939.5px;top:142px;font-size:11px;line-height:11px;transform:scaleX(0.876);">Example</span>
<span class="t" style="left:1307px;top:142px;font-size:11px;line-height:11px;transform:scaleX(0.913);">System</span>
<span class="t" style="left:1307px;top:156px;font-size:11px;line-height:11px;transform:scaleX(0.988);">Administrator</span>
<span class="t" style="left:1409.5px;top:142px;font-size:11px;line-height:11px;transform:scaleX(0.972);">14/12/2021</span>
<span class="t" style="left:1409.5px;top:156px;font-size:11px;line-height:11px;transform:scaleX(0.947);">10:41:35 AM</span>
<div class="abs" style="left:1512px;top:140.3px;width:59.5px;height:19.4px;background:#f0f0f0;border:1px solid #a9a9a9;"></div>
<span class="t" style="left:1519px;top:145px;font-size:11px;line-height:11px;transform:scaleX(0.930);">Cancelled</span>
<div class="abs" style="left:258px;top:171.5px;width:1318.5px;height:49px;background:#ffbfbf;"></div>
<div class="abs" style="left:279px;top:171.5px;width:1px;height:49px;background:rgba(240,240,240,0.85);"></div><div class="abs" style="left:304px;top:171.5px;width:1px;height:49px;background:rgba(240,240,240,0.85);"></div><div class="abs" style="left:329px;top:171.5px;width:1px;height:49px;background:rgba(240,240,240,0.85);"></div><div class="abs" style="left:354px;top:171.5px;width:1px;height:49px;background:rgba(240,240,240,0.85);"></div><div class="abs" style="left:379px;top:171.5px;width:1px;height:49px;background:rgba(240,240,240,0.85);"></div><div class="abs" style="left:404px;top:171.5px;width:1px;height:49px;background:rgba(240,240,240,0.85);"></div><div class="abs" style="left:429px;top:171.5px;width:1px;height:49px;background:rgba(240,240,240,0.85);"></div><div class="abs" style="left:519px;top:171.5px;width:1px;height:49px;background:rgba(240,240,240,0.85);"></div><div class="abs" style="left:609px;top:171.5px;width:1px;height:49px;background:rgba(240,240,240,0.85);"></div><div class="abs" style="left:699px;top:171.5px;width:1px;height:49px;background:rgba(240,240,240,0.85);"></div><div class="abs" style="left:801px;top:171.5px;width:1px;height:49px;background:rgba(240,240,240,0.85);"></div><div class="abs" style="left:934px;top:171.5px;width:1px;height:49px;background:rgba(240,240,240,0.85);"></div><div class="abs" style="left:1097px;top:171.5px;width:1px;height:49px;background:rgba(240,240,240,0.85);"></div><div class="abs" style="left:1199px;top:171.5px;width:1px;height:49px;background:rgba(240,240,240,0.85);"></div><div class="abs" style="left:1302px;top:171.5px;width:1px;height:49px;background:rgba(240,240,240,0.85);"></div><div class="abs" style="left:1404px;top:171.5px;width:1px;height:49px;background:rgba(240,240,240,0.85);"></div><div class="abs" style="left:1507px;top:171.5px;width:1px;height:49px;background:rgba(240,240,240,0.85);"></div>
<div class="abs" style="left:258px;top:220px;width:1318.5px;height:1px;background:rgba(240,240,240,0.85);"></div>
<div class="abs" style="left:262px;top:179.5px;width:13px;height:13px;background:#fff;border:1px solid #767676;border-radius:2.5px;"></div>
<span class="t" style="left:434px;top:178px;font-size:11px;line-height:11px;transform:scaleX(0.940);">2618</span>
<span class="t" style="left:524px;top:178px;font-size:11px;line-height:11px;color:#222;font-weight:700;transform:scaleX(0.950);">New</span>
<span class="t" style="left:614px;top:178px;font-size:11px;line-height:11px;transform:scaleX(0.940);">10</span>
<span class="t" style="left:704px;top:178px;font-size:11px;line-height:11px;transform:scaleX(0.940);">17/12/2021</span>
<span class="t" style="left:704px;top:191px;font-size:11px;line-height:11px;transform:scaleX(0.940);">9:04:00 AM</span>
<span class="t" style="left:704.5px;top:205px;font-size:11px;line-height:11px;color:#ff0000;font-weight:700;transform:scaleX(0.941);">Overdue</span>
<span class="t" style="left:806.5px;top:178px;font-size:11px;line-height:11px;transform:scaleX(0.940);">John</span>
<span class="t" style="left:939.5px;top:178px;font-size:11px;line-height:11px;transform:scaleX(0.956);">Summary of failures</span>
<span class="t" style="left:1101.5px;top:178px;font-size:11px;line-height:11px;transform:scaleX(0.932);">Benny Wong</span>
<span class="t" style="left:1204.5px;top:178px;font-size:11px;line-height:11px;transform:scaleX(0.966);">Application</span>
<span class="t" style="left:1204.5px;top:191px;font-size:11px;line-height:11px;transform:scaleX(0.934);">Support</span>
<span class="t" style="left:1307px;top:178px;font-size:11px;line-height:11px;transform:scaleX(0.913);">System</span>
<span class="t" style="left:1307px;top:191px;font-size:11px;line-height:11px;transform:scaleX(0.988);">Administrator</span>
<span class="t" style="left:1409.5px;top:178px;font-size:11px;line-height:11px;transform:scaleX(0.972);">14/12/2021</span>
<span class="t" style="left:1409.5px;top:191px;font-size:11px;line-height:11px;transform:scaleX(0.940);">9:04:37 AM</span>
<div class="abs" style="left:1512px;top:176.5px;width:59.5px;height:19.4px;background:#f0f0f0;border:1px solid #a9a9a9;"></div>
<span class="t" style="left:1519px;top:181px;font-size:11px;line-height:11px;transform:scaleX(0.930);">Cancelled</span>
<div class="abs" style="left:258px;top:220.5px;width:1318.5px;height:36px;background:#bfffbf;"></div>
<div class="abs" style="left:279px;top:220.5px;width:1px;height:36px;background:rgba(240,240,240,0.85);"></div><div class="abs" style="left:304px;top:220.5px;width:1px;height:36px;background:rgba(240,240,240,0.85);"></div><div class="abs" style="left:329px;top:220.5px;width:1px;height:36px;background:rgba(240,240,240,0.85);"></div><div class="abs" style="left:354px;top:220.5px;width:1px;height:36px;background:rgba(240,240,240,0.85);"></div><div class="abs" style="left:379px;top:220.5px;width:1px;height:36px;background:rgba(240,240,240,0.85);"></div><div class="abs" style="left:404px;top:220.5px;width:1px;height:36px;background:rgba(240,240,240,0.85);"></div><div class="abs" style="left:429px;top:220.5px;width:1px;height:36px;background:rgba(240,240,240,0.85);"></div><div class="abs" style="left:519px;top:220.5px;width:1px;height:36px;background:rgba(240,240,240,0.85);"></div><div class="abs" style="left:609px;top:220.5px;width:1px;height:36px;background:rgba(240,240,240,0.85);"></div><div class="abs" style="left:699px;top:220.5px;width:1px;height:36px;background:rgba(240,240,240,0.85);"></div><div class="abs" style="left:801px;top:220.5px;width:1px;height:36px;background:rgba(240,240,240,0.85);"></div><div class="abs" style="left:934px;top:220.5px;width:1px;height:36px;background:rgba(240,240,240,0.85);"></div><div class="abs" style="left:1097px;top:220.5px;width:1px;height:36px;background:rgba(240,240,240,0.85);"></div><div class="abs" style="left:1199px;top:220.5px;width:1px;height:36px;background:rgba(240,240,240,0.85);"></div><div class="abs" style="left:1302px;top:220.5px;width:1px;height:36px;background:rgba(240,240,240,0.85);"></div><div class="abs" style="left:1404px;top:220.5px;width:1px;height:36px;background:rgba(240,240,240,0.85);"></div><div class="abs" style="left:1507px;top:220.5px;width:1px;height:36px;background:rgba(240,240,240,0.85);"></div>
<div class="abs" style="left:258px;top:256px;width:1318.5px;height:1px;background:rgba(240,240,240,0.85);"></div>
<div class="abs" style="left:262px;top:228.5px;width:13px;height:13px;background:#fff;border:1px solid #767676;border-radius:2.5px;"></div>
<span class="t" style="left:434px;top:227px;font-size:11px;line-height:11px;transform:scaleX(0.940);">2617</span>
<span class="t" style="left:524px;top:227px;font-size:11px;line-height:11px;color:#222;font-weight:700;transform:scaleX(0.950);">New</span>
<span class="t" style="left:614px;top:227px;font-size:11px;line-height:11px;transform:scaleX(0.940);">10</span>
<span class="t" style="left:704px;top:227px;font-size:11px;line-height:11px;transform:scaleX(0.940);">22/12/2021</span>
<span class="t" style="left:704px;top:240px;font-size:11px;line-height:11px;transform:scaleX(0.940);">5:00:00 PM</span>
<span class="t" style="left:806.5px;top:227px;font-size:11px;line-height:11px;transform:scaleX(0.940);">Joe Black</span>
<span class="t" style="left:939.5px;top:227px;font-size:11px;line-height:11px;transform:scaleX(0.956);">Summary of failures</span>
<span class="t" style="left:1307px;top:227px;font-size:11px;line-height:11px;transform:scaleX(0.913);">System</span>
<span class="t" style="left:1307px;top:240px;font-size:11px;line-height:11px;transform:scaleX(0.988);">Administrator</span>
<span class="t" style="left:1409.5px;top:227px;font-size:11px;line-height:11px;transform:scaleX(0.940);">13/12/2021</span>
<span class="t" style="left:1409.5px;top:240px;font-size:11px;line-height:11px;transform:scaleX(0.940);">5:41:46 PM</span>
<div class="abs" style="left:1512px;top:226px;width:59.5px;height:19.4px;background:#f0f0f0;border:1px solid #a9a9a9;"></div>
<span class="t" style="left:1519px;top:231px;font-size:11px;line-height:11px;transform:scaleX(0.930);">Cancelled</span>
<div class="abs" style="left:258px;top:256.5px;width:1318.5px;height:35px;background:#bfffbf;"></div>
<div class="abs" style="left:279px;top:256.5px;width:1px;height:35px;background:rgba(240,240,240,0.85);"></div><div class="abs" style="left:304px;top:256.5px;width:1px;height:35px;background:rgba(240,240,240,0.85);"></div><div class="abs" style="left:329px;top:256.5px;width:1px;height:35px;background:rgba(240,240,240,0.85);"></div><div class="abs" style="left:354px;top:256.5px;width:1px;height:35px;background:rgba(240,240,240,0.85);"></div><div class="abs" style="left:379px;top:256.5px;width:1px;height:35px;background:rgba(240,240,240,0.85);"></div><div class="abs" style="left:404px;top:256.5px;width:1px;height:35px;background:rgba(240,240,240,0.85);"></div><div class="abs" style="left:429px;top:256.5px;width:1px;height:35px;background:rgba(240,240,240,0.85);"></div><div class="abs" style="left:519px;top:256.5px;width:1px;height:35px;background:rgba(240,240,240,0.85);"></div><div class="abs" style="left:609px;top:256.5px;width:1px;height:35px;background:rgba(240,240,240,0.85);"></div><div class="abs" style="left:699px;top:256.5px;width:1px;height:35px;background:rgba(240,240,240,0.85);"></div><div class="abs" style="left:801px;top:256.5px;width:1px;height:35px;background:rgba(240,240,240,0.85);"></div><div class="abs" style="left:934px;top:256.5px;width:1px;height:35px;background:rgba(240,240,240,0.85);"></div><div class="abs" style="left:1097px;top:256.5px;width:1px;height:35px;background:rgba(240,240,240,0.85);"></div><div class="abs" style="left:1199px;top:256.5px;width:1px;height:35px;background:rgba(240,240,240,0.85);"></div><div class="abs" style="left:1302px;top:256.5px;width:1px;height:35px;background:rgba(240,240,240,0.85);"></div><div class="abs" style="left:1404px;top:256.5px;width:1px;height:35px;background:rgba(240,240,240,0.85);"></div><div class="abs" style="left:1507px;top:256.5px;width:1px;height:35px;background:rgba(240,240,240,0.85);"></div>
<div class="abs" style="left:258px;top:291px;width:1318.5px;height:1px;background:rgba(240,240,240,0.85);"></div>
<div class="abs" style="left:262px;top:264.5px;width:13px;height:13px;background:#fff;border:1px solid #767676;border-radius:2.5px;"></div>
<span class="t" style="left:434px;top:263px;font-size:11px;line-height:11px;transform:scaleX(0.940);">2616</span>
<span class="t" style="left:524px;top:263px;font-size:11px;line-height:11px;color:#222;font-weight:700;transform:scaleX(0.950);">New</span>
<span class="t" style="left:614px;top:263px;font-size:11px;line-height:11px;transform:scaleX(0.940);">10</span>
<span class="t" style="left:704px;top:263px;font-size:11px;line-height:11px;transform:scaleX(0.940);">22/12/2021</span>
<span class="t" style="left:704px;top:276px;font-size:11px;line-height:11px;transform:scaleX(0.940);">12:17:00 PM</span>
<span class="t" style="left:806.5px;top:263px;font-size:11px;line-height:11px;transform:scaleX(0.940);">Tim Price</span>
<span class="t" style="left:939.5px;top:263px;font-size:11px;line-height:11px;transform:scaleX(0.940);">Websites</span>
<span class="t" style="left:1101.5px;top:263px;font-size:11px;line-height:11px;transform:scaleX(0.932);">Benny Wong</span>
<span class="t" style="left:1204.5px;top:263px;font-size:11px;line-height:11px;transform:scaleX(0.939);">Customer Care</span>
<span class="t" style="left:1307px;top:263px;font-size:11px;line-height:11px;transform:scaleX(0.913);">System</span>
<span class="t" style="left:1307px;top:276px;font-size:11px;line-height:11px;transform:scaleX(0.988);">Administrator</span>
<span class="t" style="left:1409.5px;top:263px;font-size:11px;line-height:11px;transform:scaleX(0.940);">13/12/2021</span>
<span class="t" style="left:1409.5px;top:276px;font-size:11px;line-height:11px;transform:scaleX(0.940);">12:17:43 PM</span>
<div class="abs" style="left:1512px;top:262px;width:59.5px;height:19.4px;background:#f0f0f0;border:1px solid #a9a9a9;"></div>
<span class="t" style="left:1519px;top:267px;font-size:11px;line-height:11px;transform:scaleX(0.930);">Cancelled</span>
<div class="abs" style="left:258px;top:291.5px;width:1318.5px;height:49px;background:#ffffbf;"></div>
<div class="abs" style="left:279px;top:291.5px;width:1px;height:49px;background:rgba(240,240,240,0.85);"></div><div class="abs" style="left:304px;top:291.5px;width:1px;height:49px;background:rgba(240,240,240,0.85);"></div><div class="abs" style="left:329px;top:291.5px;width:1px;height:49px;background:rgba(240,240,240,0.85);"></div><div class="abs" style="left:354px;top:291.5px;width:1px;height:49px;background:rgba(240,240,240,0.85);"></div><div class="abs" style="left:379px;top:291.5px;width:1px;height:49px;background:rgba(240,240,240,0.85);"></div><div class="abs" style="left:404px;top:291.5px;width:1px;height:49px;background:rgba(240,240,240,0.85);"></div><div class="abs" style="left:429px;top:291.5px;width:1px;height:49px;background:rgba(240,240,240,0.85);"></div><div class="abs" style="left:519px;top:291.5px;width:1px;height:49px;background:rgba(240,240,240,0.85);"></div><div class="abs" style="left:609px;top:291.5px;width:1px;height:49px;background:rgba(240,240,240,0.85);"></div><div class="abs" style="left:699px;top:291.5px;width:1px;height:49px;background:rgba(240,240,240,0.85);"></div><div class="abs" style="left:801px;top:291.5px;width:1px;height:49px;background:rgba(240,240,240,0.85);"></div><div class="abs" style="left:934px;top:291.5px;width:1px;height:49px;background:rgba(240,240,240,0.85);"></div><div class="abs" style="left:1097px;top:291.5px;width:1px;height:49px;background:rgba(240,240,240,0.85);"></div><div class="abs" style="left:1199px;top:291.5px;width:1px;height:49px;background:rgba(240,240,240,0.85);"></div><div class="abs" style="left:1302px;top:291.5px;width:1px;height:49px;background:rgba(240,240,240,0.85);"></div><div class="abs" style="left:1404px;top:291.5px;width:1px;height:49px;background:rgba(240,240,240,0.85);"></div><div class="abs" style="left:1507px;top:291.5px;width:1px;height:49px;background:rgba(240,240,240,0.85);"></div>
<div class="abs" style="left:258px;top:340px;width:1318.5px;height:1px;background:rgba(240,240,240,0.85);"></div>
<div class="abs" style="left:262px;top:299.5px;width:13px;height:13px;background:#fff;border:1px solid #767676;border-radius:2.5px;"></div>
<svg class="abs" style="left:309.7px;top:299.2px" width="14" height="10.5" viewBox="0 0 14 10.5" ><rect x="0" y="0" width="14" height="10.5" fill="#e8bf7a"/><path d="M0.6 1.2 L7 6.2 L13.4 1.2" fill="none" stroke="#fff" stroke-width="1.3"/></svg>
<span class="t" style="left:434px;top:298px;font-size:11px;line-height:11px;transform:scaleX(0.940);">2615</span>
<span class="t" style="left:524px;top:298px;font-size:11px;line-height:11px;transform:scaleX(0.940);">Open</span>
<span class="t" style="left:614px;top:298px;font-size:11px;line-height:11px;transform:scaleX(0.940);">10</span>
<span class="t" style="left:704px;top:298px;font-size:11px;line-height:11px;transform:scaleX(0.940);">20/12/2021</span>
<span class="t" style="left:704px;top:312px;font-size:11px;line-height:11px;transform:scaleX(0.940);">4:49:00 PM</span>
<span class="t" style="left:704.5px;top:325px;font-size:11px;line-height:11px;color:#ff0000;font-weight:700;transform:scaleX(0.941);">Overdue</span>
<span class="t" style="left:806.5px;top:298px;font-size:11px;line-height:11px;transform:scaleX(0.912);">Kimmy Dave <span style="color:#6e6e6e">(SRS)</span></span>
<span class="t" style="left:939.5px;top:298px;font-size:11px;line-height:11px;transform:scaleX(0.876);">Example</span>
<span class="t" style="left:1101.5px;top:298px;font-size:11px;line-height:11px;transform:scaleX(0.932);">Benny Wong</span>
<span class="t" style="left:1204.5px;top:298px;font-size:11px;line-height:11px;transform:scaleX(0.939);">Customer Care</span>
<span class="t" style="left:1307px;top:298px;font-size:11px;line-height:11px;transform:scaleX(0.913);">System</span>
<span class="t" style="left:1307px;top:312px;font-size:11px;line-height:11px;transform:scaleX(0.988);">Administrator</span>
<span class="t" style="left:1409.5px;top:298px;font-size:11px;line-height:11px;transform:scaleX(0.940);">7/12/2021</span>
<span class="t" style="left:1409.5px;top:312px;font-size:11px;line-height:11px;transform:scaleX(0.940);">4:22:46 PM</span>
<div class="abs" style="left:1512px;top:297px;width:59.5px;height:19.4px;background:#f0f0f0;border:1px solid #a9a9a9;"></div>
<span class="t" style="left:1519px;top:302px;font-size:11px;line-height:11px;transform:scaleX(0.930);">Cancelled</span>
<div class="abs" style="left:258px;top:340.5px;width:1318.5px;height:49px;background:#ffbfbf;"></div>
<div class="abs" style="left:279px;top:340.5px;width:1px;height:49px;background:rgba(240,240,240,0.85);"></div><div class="abs" style="left:304px;top:340.5px;width:1px;height:49px;background:rgba(240,240,240,0.85);"></div><div class="abs" style="left:329px;top:340.5px;width:1px;height:49px;background:rgba(240,240,240,0.85);"></div><div class="abs" style="left:354px;top:340.5px;width:1px;height:49px;background:rgba(240,240,240,0.85);"></div><div class="abs" style="left:379px;top:340.5px;width:1px;height:49px;background:rgba(240,240,240,0.85);"></div><div class="abs" style="left:404px;top:340.5px;width:1px;height:49px;background:rgba(240,240,240,0.85);"></div><div class="abs" style="left:429px;top:340.5px;width:1px;height:49px;background:rgba(240,240,240,0.85);"></div><div class="abs" style="left:519px;top:340.5px;width:1px;height:49px;background:rgba(240,240,240,0.85);"></div><div class="abs" style="left:609px;top:340.5px;width:1px;height:49px;background:rgba(240,240,240,0.85);"></div><div class="abs" style="left:699px;top:340.5px;width:1px;height:49px;background:rgba(240,240,240,0.85);"></div><div class="abs" style="left:801px;top:340.5px;width:1px;height:49px;background:rgba(240,240,240,0.85);"></div><div class="abs" style="left:934px;top:340.5px;width:1px;height:49px;background:rgba(240,240,240,0.85);"></div><div class="abs" style="left:1097px;top:340.5px;width:1px;height:49px;background:rgba(240,240,240,0.85);"></div><div class="abs" style="left:1199px;top:340.5px;width:1px;height:49px;background:rgba(240,240,240,0.85);"></div><div class="abs" style="left:1302px;top:340.5px;width:1px;height:49px;background:rgba(240,240,240,0.85);"></div><div class="abs" style="left:1404px;top:340.5px;width:1px;height:49px;background:rgba(240,240,240,0.85);"></div><div class="abs" style="left:1507px;top:340.5px;width:1px;height:49px;background:rgba(240,240,240,0.85);"></div>
<div class="abs" style="left:258px;top:389px;width:1318.5px;height:1px;background:rgba(240,240,240,0.85);"></div>
<div class="abs" style="left:262px;top:348.5px;width:13px;height:13px;background:#fff;border:1px solid #767676;border-radius:2.5px;"></div>
<span class="t" style="left:434px;top:347px;font-size:11px;line-height:11px;transform:scaleX(0.940);">2614</span>
<span class="t" style="left:524px;top:347px;font-size:11px;line-height:11px;color:#222;font-weight:700;transform:scaleX(0.950);">New</span>
<span class="t" style="left:614px;top:347px;font-size:11px;line-height:11px;transform:scaleX(0.940);">10</span>
<span class="t" style="left:704px;top:347px;font-size:11px;line-height:11px;transform:scaleX(0.940);">15/12/2021</span>
<span class="t" style="left:704px;top:361px;font-size:11px;line-height:11px;transform:scaleX(0.940);">9:07:00 AM</span>
<span class="t" style="left:704.5px;top:374px;font-size:11px;line-height:11px;color:#ff0000;font-weight:700;transform:scaleX(0.941);">Overdue</span>
<span class="t" style="left:806.5px;top:347px;font-size:11px;line-height:11px;transform:scaleX(0.940);">Benny Wong <span style="color:#6e6e6e">(SRS)</span></span>
<span class="t" style="left:939.5px;top:347px;font-size:11px;line-height:11px;transform:scaleX(0.940);">Website Monitor</span>
<span class="t" style="left:1101.5px;top:347px;font-size:11px;line-height:11px;transform:scaleX(0.932);">Benny Wong</span>
<span class="t" style="left:1204.5px;top:347px;font-size:11px;line-height:11px;transform:scaleX(0.966);">Application</span>
<span class="t" style="left:1204.5px;top:361px;font-size:11px;line-height:11px;transform:scaleX(0.934);">Support</span>
<span class="t" style="left:1307px;top:347px;font-size:11px;line-height:11px;transform:scaleX(0.913);">System</span>
<span class="t" style="left:1307px;top:361px;font-size:11px;line-height:11px;transform:scaleX(0.988);">Administrator</span>
<span class="t" style="left:1409.5px;top:347px;font-size:11px;line-height:11px;transform:scaleX(0.940);">6/12/2021</span>
<span class="t" style="left:1409.5px;top:361px;font-size:11px;line-height:11px;transform:scaleX(0.940);">9:07:09 AM</span>
<div class="abs" style="left:1512px;top:346px;width:59.5px;height:19.4px;background:#f0f0f0;border:1px solid #a9a9a9;"></div>
<span class="t" style="left:1519px;top:351px;font-size:11px;line-height:11px;transform:scaleX(0.930);">Cancelled</span>
<div class="abs" style="left:258px;top:389.5px;width:1318.5px;height:49px;background:#ffbfbf;"></div>
<div class="abs" style="left:279px;top:389.5px;width:1px;height:49px;background:rgba(240,240,240,0.85);"></div><div class="abs" style="left:304px;top:389.5px;width:1px;height:49px;background:rgba(240,240,240,0.85);"></div><div class="abs" style="left:329px;top:389.5px;width:1px;height:49px;background:rgba(240,240,240,0.85);"></div><div class="abs" style="left:354px;top:389.5px;width:1px;height:49px;background:rgba(240,240,240,0.85);"></div><div class="abs" style="left:379px;top:389.5px;width:1px;height:49px;background:rgba(240,240,240,0.85);"></div><div class="abs" style="left:404px;top:389.5px;width:1px;height:49px;background:rgba(240,240,240,0.85);"></div><div class="abs" style="left:429px;top:389.5px;width:1px;height:49px;background:rgba(240,240,240,0.85);"></div><div class="abs" style="left:519px;top:389.5px;width:1px;height:49px;background:rgba(240,240,240,0.85);"></div><div class="abs" style="left:609px;top:389.5px;width:1px;height:49px;background:rgba(240,240,240,0.85);"></div><div class="abs" style="left:699px;top:389.5px;width:1px;height:49px;background:rgba(240,240,240,0.85);"></div><div class="abs" style="left:801px;top:389.5px;width:1px;height:49px;background:rgba(240,240,240,0.85);"></div><div class="abs" style="left:934px;top:389.5px;width:1px;height:49px;background:rgba(240,240,240,0.85);"></div><div class="abs" style="left:1097px;top:389.5px;width:1px;height:49px;background:rgba(240,240,240,0.85);"></div><div class="abs" style="left:1199px;top:389.5px;width:1px;height:49px;background:rgba(240,240,240,0.85);"></div><div class="abs" style="left:1302px;top:389.5px;width:1px;height:49px;background:rgba(240,240,240,0.85);"></div><div class="abs" style="left:1404px;top:389.5px;width:1px;height:49px;background:rgba(240,240,240,0.85);"></div><div class="abs" style="left:1507px;top:389.5px;width:1px;height:49px;background:rgba(240,240,240,0.85);"></div>
<div class="abs" style="left:258px;top:438px;width:1318.5px;height:1px;background:rgba(240,240,240,0.85);"></div>
<div class="abs" style="left:262px;top:397.5px;width:13px;height:13px;background:#fff;border:1px solid #767676;border-radius:2.5px;"></div>
<span class="t" style="left:434px;top:396px;font-size:11px;line-height:11px;transform:scaleX(0.940);">2613</span>
<span class="t" style="left:524px;top:396px;font-size:11px;line-height:11px;color:#222;font-weight:700;transform:scaleX(0.950);">New</span>
<span class="t" style="left:614px;top:396px;font-size:11px;line-height:11px;transform:scaleX(0.940);">10</span>
<span class="t" style="left:704px;top:396px;font-size:11px;line-height:11px;transform:scaleX(0.940);">13/12/2021</span>
<span class="t" style="left:704px;top:410px;font-size:11px;line-height:11px;transform:scaleX(0.940);">11:37:00 AM</span>
<span class="t" style="left:704.5px;top:423px;font-size:11px;line-height:11px;color:#ff0000;font-weight:700;transform:scaleX(0.941);">Overdue</span>
<span class="t" style="left:806.5px;top:396px;font-size:11px;line-height:11px;transform:scaleX(0.912);">Kimmy Dave <span style="color:#6e6e6e">(SRS)</span></span>
<span class="t" style="left:939.5px;top:396px;font-size:11px;line-height:11px;transform:scaleX(0.966);">Application</span>
<span class="t" style="left:1307px;top:396px;font-size:11px;line-height:11px;transform:scaleX(0.913);">System</span>
<span class="t" style="left:1307px;top:410px;font-size:11px;line-height:11px;transform:scaleX(0.988);">Administrator</span>
<span class="t" style="left:1409.5px;top:396px;font-size:11px;line-height:11px;transform:scaleX(0.940);">2/12/2021</span>
<span class="t" style="left:1409.5px;top:410px;font-size:11px;line-height:11px;transform:scaleX(0.940);">11:37:44 AM</span>
<div class="abs" style="left:1512px;top:395px;width:59.5px;height:19.4px;background:#f0f0f0;border:1px solid #a9a9a9;"></div>
<span class="t" style="left:1519px;top:400px;font-size:11px;line-height:11px;transform:scaleX(0.930);">Cancelled</span>
<div class="abs" style="left:258px;top:438.5px;width:1318.5px;height:49px;background:#ffbfbf;"></div>
<div class="abs" style="left:279px;top:438.5px;width:1px;height:49px;background:rgba(240,240,240,0.85);"></div><div class="abs" style="left:304px;top:438.5px;width:1px;height:49px;background:rgba(240,240,240,0.85);"></div><div class="abs" style="left:329px;top:438.5px;width:1px;height:49px;background:rgba(240,240,240,0.85);"></div><div class="abs" style="left:354px;top:438.5px;width:1px;height:49px;background:rgba(240,240,240,0.85);"></div><div class="abs" style="left:379px;top:438.5px;width:1px;height:49px;background:rgba(240,240,240,0.85);"></div><div class="abs" style="left:404px;top:438.5px;width:1px;height:49px;background:rgba(240,240,240,0.85);"></div><div class="abs" style="left:429px;top:438.5px;width:1px;height:49px;background:rgba(240,240,240,0.85);"></div><div class="abs" style="left:519px;top:438.5px;width:1px;height:49px;background:rgba(240,240,240,0.85);"></div><div class="abs" style="left:609px;top:438.5px;width:1px;height:49px;background:rgba(240,240,240,0.85);"></div><div class="abs" style="left:699px;top:438.5px;width:1px;height:49px;background:rgba(240,240,240,0.85);"></div><div class="abs" style="left:801px;top:438.5px;width:1px;height:49px;background:rgba(240,240,240,0.85);"></div><div class="abs" style="left:934px;top:438.5px;width:1px;height:49px;background:rgba(240,240,240,0.85);"></div><div class="abs" style="left:1097px;top:438.5px;width:1px;height:49px;background:rgba(240,240,240,0.85);"></div><div class="abs" style="left:1199px;top:438.5px;width:1px;height:49px;background:rgba(240,240,240,0.85);"></div><div class="abs" style="left:1302px;top:438.5px;width:1px;height:49px;background:rgba(240,240,240,0.85);"></div><div class="abs" style="left:1404px;top:438.5px;width:1px;height:49px;background:rgba(240,240,240,0.85);"></div><div class="abs" style="left:1507px;top:438.5px;width:1px;height:49px;background:rgba(240,240,240,0.85);"></div>
<div class="abs" style="left:258px;top:487px;width:1318.5px;height:1px;background:rgba(240,240,240,0.85);"></div>
<div class="abs" style="left:262px;top:446.5px;width:13px;height:13px;background:#fff;border:1px solid #767676;border-radius:2.5px;"></div>
<span class="t" style="left:434px;top:445px;font-size:11px;line-height:11px;transform:scaleX(0.940);">2612</span>
<span class="t" style="left:524px;top:445px;font-size:11px;line-height:11px;color:#222;font-weight:700;transform:scaleX(0.950);">New</span>
<span class="t" style="left:614px;top:445px;font-size:11px;line-height:11px;transform:scaleX(0.940);">10</span>
<span class="t" style="left:704px;top:445px;font-size:11px;line-height:11px;transform:scaleX(0.940);">13/12/2021</span>
<span class="t" style="left:704px;top:459px;font-size:11px;line-height:11px;transform:scaleX(0.940);">9:21:00 AM</span>
<span class="t" style="left:704.5px;top:472px;font-size:11px;line-height:11px;color:#ff0000;font-weight:700;transform:scaleX(0.941);">Overdue</span>
<span class="t" style="left:806.5px;top:445px;font-size:11px;line-height:11px;transform:scaleX(0.940);">donny Lum <span style="color:#6e6e6e">(SRS)</span></span>
<span class="t" style="left:939.5px;top:445px;font-size:11px;line-height:11px;transform:scaleX(0.940);">Questions</span>
<span class="t" style="left:1307px;top:445px;font-size:11px;line-height:11px;transform:scaleX(0.913);">System</span>
<span class="t" style="left:1307px;top:459px;font-size:11px;line-height:11px;transform:scaleX(0.988);">Administrator</span>
<span class="t" style="left:1409.5px;top:445px;font-size:11px;line-height:11px;transform:scaleX(0.940);">2/12/2021</span>
<span class="t" style="left:1409.5px;top:459px;font-size:11px;line-height:11px;transform:scaleX(0.940);">9:21:51 AM</span>
<div class="abs" style="left:1512px;top:444px;width:59.5px;height:19.4px;background:#f0f0f0;border:1px solid #a9a9a9;"></div>
<span class="t" style="left:1519px;top:449px;font-size:11px;line-height:11px;transform:scaleX(0.930);">Cancelled</span>
<div class="abs" style="left:1576px;top:110px;width:17px;height:374px;background:#f1f1f1;"></div>
<svg class="abs" style="left:1581.5px;top:114.5px" width="8" height="4.2" viewBox="0 0 8 4.2" ><path d="M0 4.2 L4 0 L8 4.2 Z" fill="#a3a3a3"/></svg>
<div class="abs" style="left:1579px;top:125px;width:13px;height:268.5px;background:#c1c1c1;"></div>
<svg class="abs" style="left:1581.7px;top:473px" width="8" height="4.2" viewBox="0 0 8 4.2" ><path d="M0 0 L4 4.2 L8 0 Z" fill="#505050"/></svg>
<div class="abs" style="left:251px;top:484px;width:1348px;height:279px;background:#fff;border:3px solid #e81123;"></div>
<div class="abs" style="left:255px;top:489px;width:1341px;height:271px;background:#fff;border:1px solid #ececec;border-bottom:none;"></div>
<svg class="abs" style="left:264px;top:495.1px" width="10" height="13.6" viewBox="0 0 10 13.6" ><path d="M0 0 H7.4 L10 2.6 V13.6 H0 Z" fill="#90caf9"/><path d="M7.4 0 L10 2.6 H7.4 Z" fill="#d4e9fb"/><path d="M3.6 3.6 C4.6 4.4 5.3 5.3 5.5 6.4 C5.9 5.9 6.2 5.3 6.3 4.8 C7.4 6 8 7.3 8 8.6 C8 10.5 6.8 11.7 5.3 11.7 C3.7 11.7 2.6 10.6 2.6 9 C2.6 7.6 3.4 6.8 3.7 5.8 C3.9 5.1 3.8 4.3 3.6 3.6 Z" fill="#f4511e"/><path d="M5.3 7.6 C6 8.3 6.6 9 6.6 9.8 C6.6 10.7 6 11.2 5.3 11.2 C4.5 11.2 4 10.7 4 9.9 C4 9 4.9 8.5 5.3 7.6 Z" fill="#ffd95a"/></svg>
<span class="t" style="left:286.4px;top:492px;font-size:15px;line-height:15px;color:#1b3a8e;-webkit-text-stroke:0.15px #fff;transform:scaleX(1.042);">Hot News Board</span>
<div class="abs" style="left:256.5px;top:517px;width:1321px;height:23px;background:#f0f0f0;"></div>
<div class="abs" style="left:364px;top:517px;width:1px;height:23px;background:#f8f8f8;"></div>
<div class="abs" style="left:466px;top:517px;width:1px;height:23px;background:#f8f8f8;"></div>
<div class="abs" style="left:1393px;top:517px;width:1px;height:23px;background:#f8f8f8;"></div>
<span class="t" style="left:261.2px;top:524px;font-size:11px;line-height:11px;transform:scaleX(0.957);">Title</span>
<span class="t" style="left:369.3px;top:524px;font-size:11px;line-height:11px;transform:scaleX(0.948);">Category</span>
<span class="t" style="left:471.2px;top:524px;font-size:11px;line-height:11px;transform:scaleX(0.922);">Details</span>
<span class="t" style="left:1398.5px;top:524px;font-size:11px;line-height:11px;transform:scaleX(0.946);">Date</span>
<div class="abs" style="left:256.5px;top:540px;width:1321px;height:48px;background:#ffe999;"></div>
<div class="abs" style="left:364px;top:540px;width:1px;height:48px;background:rgba(240,240,240,0.85);"></div>
<div class="abs" style="left:466px;top:540px;width:1px;height:48px;background:rgba(240,240,240,0.85);"></div>
<div class="abs" style="left:1393px;top:540px;width:1px;height:48px;background:rgba(240,240,240,0.85);"></div>
<div class="abs" style="left:1577px;top:540px;width:1px;height:49px;background:#707070;"></div>
<span class="t" style="left:261.2px;top:546px;font-size:11px;line-height:11px;color:#222;font-weight:700;transform:scaleX(0.962);">IT Help Desk</span>
<span class="t" style="left:369.3px;top:546px;font-size:11px;line-height:11px;transform:scaleX(0.955);">Staff Bulletin</span>
<span class="t" style="left:471.2px;top:546px;font-size:11px;line-height:11px;color:#222;font-weight:700;transform:scaleX(0.950);">Comrehensively manage your IT service requests from start to finish.</span>
<span class="t" style="left:471.2px;top:573px;font-size:11px;line-height:11px;transform:scaleX(0.964);">Use a vast array of methods to track, categorise and potentially report on any issues logged vial email or manually into the system.</span>
<span class="t" style="left:1398.5px;top:546px;font-size:11px;line-height:11px;transform:scaleX(0.984);">2/10/2012 - 31/12/2021</span>
<div class="abs" style="left:1578px;top:489px;width:17.5px;height:271px;background:#f1f1f1;"></div>
<svg class="abs" style="left:1582.5px;top:497px" width="8" height="4.2" viewBox="0 0 8 4.2" ><path d="M0 4.2 L4 0 L8 4.2 Z" fill="#a3a3a3"/></svg>
<div class="abs" style="left:1580.5px;top:507px;width:12.5px;height:223.5px;background:#c1c1c1;"></div>
<svg class="abs" style="left:1582.7px;top:750px" width="8" height="4.2" viewBox="0 0 8 4.2" ><path d="M0 0 L4 4.2 L8 0 Z" fill="#505050"/></svg>
<div class="abs" style="left:0px;top:763px;width:1600px;height:46px;background:#f0f0f0;"></div>
<span class="t" style="left:10.8px;top:770px;font-size:27.4px;line-height:27.4px;color:#2f80c8;-webkit-text-stroke:0.85px #f0f0f0;transform:scaleX(0.811);">Cases</span>
<span class="t" style="left:87.2px;top:770px;font-size:27.4px;line-height:27.4px;color:#5c5c5c;-webkit-text-stroke:0.85px #f0f0f0;transform:scaleX(0.886);">Problems</span>
<span class="t" style="left:202.3px;top:770px;font-size:27.4px;line-height:27.4px;color:#5c5c5c;-webkit-text-stroke:0.85px #f0f0f0;transform:scaleX(0.764);">RFCs</span>
<span class="t" style="left:268px;top:770px;font-size:27.4px;line-height:27.4px;color:#5c5c5c;-webkit-text-stroke:0.85px #f0f0f0;transform:scaleX(0.786);">Tasks</span>
<span class="t" style="left:335.2px;top:770px;font-size:27.4px;line-height:27.4px;color:#5c5c5c;-webkit-text-stroke:0.85px #f0f0f0;transform:scaleX(0.900);">Calendar</span>
<span class="t" style="left:447.5px;top:770px;font-size:27.4px;line-height:27.4px;color:#5c5c5c;-webkit-text-stroke:0.85px #f0f0f0;transform:scaleX(0.902);">Organisations</span>
<span class="t" style="left:612.5px;top:770px;font-size:27.4px;line-height:27.4px;color:#5c5c5c;-webkit-text-stroke:0.85px #f0f0f0;transform:scaleX(0.893);">Contacts</span>
<span class="t" style="left:721.3px;top:770px;font-size:27.4px;line-height:27.4px;color:#5c5c5c;-webkit-text-stroke:0.85px #f0f0f0;transform:scaleX(0.861);">Messages</span>
<div class="abs" style="left:0px;top:808px;width:1600px;height:1px;background:#fafafa;"></div>
<div class="abs" style="left:0px;top:809px;width:1600px;height:1px;background:#9a9a9a;"></div>
<div class="abs" style="left:0px;top:810px;width:1600px;height:27px;background:#0072c6;"></div>
<span class="t" style="left:9.5px;top:818px;font-size:11px;line-height:11px;color:#fff;transform:scaleX(0.947);">Logged in as Benny Wong</span>
<svg class="abs" style="left:152.7px;top:813.8px" width="17.3" height="17" viewBox="0 0 17.3 17" ><g fill="none" stroke="#fff" stroke-width="1.1"><rect x="0.6" y="0.6" width="5.6" height="15.8"/><rect x="2.1" y="2.2" width="2.6" height="2.6" stroke-width="0.9"/><rect x="2.1" y="7.2" width="2.6" height="2.6" stroke-width="0.9"/><rect x="2.1" y="12.2" width="2.6" height="2.6" stroke-width="0.9"/><path d="M8.3 3 H11.8 M13.3 3 H17 M8.3 8.5 H11.8 M13.3 8.5 H17 M8.3 13.6 H11.8 M13.3 13.6 H17" stroke-width="1.5"/></g></svg>
<span class="t" style="left:188.2px;top:819px;font-size:11px;line-height:11px;color:#fff;transform:scaleX(0.918);">Unread Emails:</span>
<span class="t" style="left:270.3px;top:819px;font-size:11px;line-height:11px;color:#fff;transform:scaleX(0.898);">12</span>
<span class="t" style="left:304.5px;top:819px;font-size:11px;line-height:11px;color:#fff;transform:scaleX(0.931);">0</span>
<span class="t" style="left:333.3px;top:819px;font-size:11px;line-height:11px;color:#fff;transform:scaleX(0.931);">0</span>
<span class="t" style="left:362.2px;top:819px;font-size:11px;line-height:11px;color:#fff;transform:scaleX(0.931);">0</span>
<svg class="abs" style="left:1308.7px;top:818.3px" width="14.5" height="12" viewBox="0 0 14.5 12" ><g fill="none" stroke="#fff" stroke-width="1.2"><path d="M0.6 0.6 H10.5 V7.6 H4.5 L2.8 9.6 V7.6 H0.6 Z"/><path d="M12.5 2.5 H13.9 V9.6 H12 V11.4 L10.3 9.6 H5.5"/></g></svg>
<span class="t" style="left:1331.2px;top:819px;font-size:11px;line-height:11px;color:#fff;transform:scaleX(0.939);">versaChat (Offline)</span>
<svg class="abs" style="left:1439.5px;top:818.5px" width="11" height="11.5" viewBox="0 0 11 11.5" ><g fill="none" stroke="#fff" stroke-width="1"><path d="M0.8 8.2 L6.8 1 L10 3.6 L4 10.8 Z"/><path d="M2.6 6 L5.8 8.7 M4.6 3.7 L7.8 6.3"/><path d="M2.2 3.6 C4.5 1.2 8.8 2.8 9.2 8.5"/></g></svg>
<svg class="abs" style="left:1464px;top:815.2px" width="15.6" height="15.4" viewBox="0 0 15.6 15.4" ><g fill="none" stroke="#fff"><rect x="0.6" y="0.6" width="14.4" height="14.2" stroke-width="1.2"/><path d="M0.6 3.6 H15 M0.6 6.6 H15 M0.6 9.6 H15 M0.6 12.4 H15" stroke-width="1.4"/></g></svg>
<svg class="abs" style="left:1486px;top:815.2px" width="15.6" height="15.4" viewBox="0 0 15.6 15.4" ><g fill="none" stroke="#fff"><rect x="0.6" y="0.6" width="14.4" height="14.2" stroke-width="1.2"/><path d="M6.6 0.6 V14.8" stroke-width="1.3"/><path d="M1.8 3.3 H6.6 M1.8 5.8 H6.6 M1.8 8.3 H6.6 M1.8 10.8 H6.6 M1.8 13 H6.6" stroke-width="1"/></g></svg>
<div class="abs" style="left:1503.4px;top:809.3px;width:25.7px;height:28px;border:3px solid #e81123;"></div>
<svg class="abs" style="left:1508px;top:815.2px" width="15.8" height="15.4" viewBox="0 0 15.8 15.4" ><g fill="none" stroke="#fff"><rect x="0.6" y="0.6" width="14.6" height="14.2" stroke-width="1.2"/><path d="M0.6 6.8 H15.2" stroke-width="1.3"/><path d="M2.4 9.3 H13.4 M2.4 11.3 H13.4 M2.4 13.2 H13.4" stroke-width="1"/></g></svg>
<svg class="abs" style="left:1530.5px;top:815.2px" width="15.6" height="15.4" viewBox="0 0 15.6 15.4" ><g fill="none" stroke="#fff"><rect x="0.6" y="0.6" width="14.4" height="14.2" stroke-width="1.2"/><path d="M8.4 0.6 V14.8" stroke-width="1.3"/><path d="M8.4 3.3 H13.6 M8.4 5.8 H13.6 M8.4 8.3 H13.6 M8.4 10.8 H13.6 M8.4 13 H13.6" stroke-width="1"/></g></svg>
<span class="t" style="left:1558px;top:818px;font-size:11px;line-height:11px;color:#fff;transform:scaleX(0.887);">16:51:59</span>
</body>
</html>
